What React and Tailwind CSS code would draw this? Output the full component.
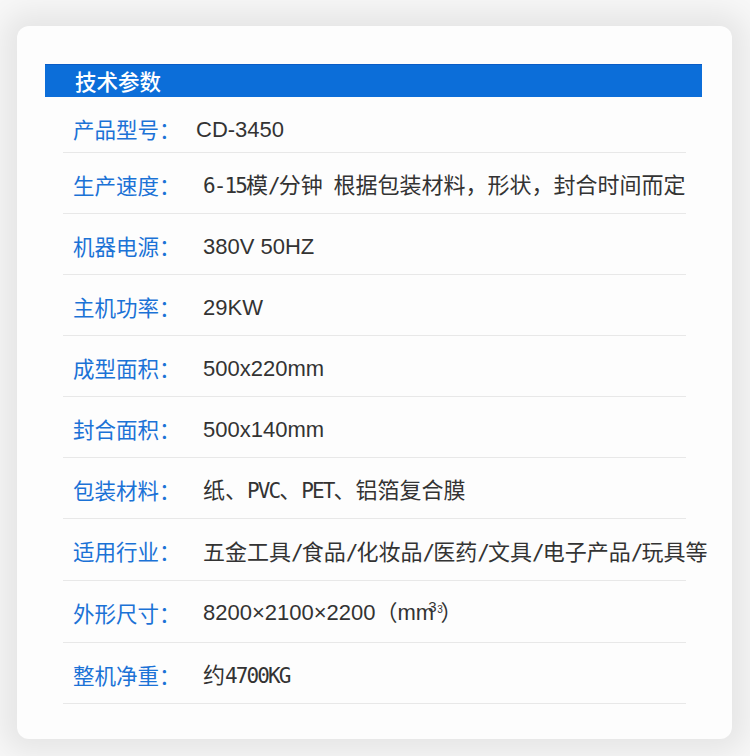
const cjk = "font-['Noto_Sans_CJK_SC',sans-serif]";
const arial = "font-['Liberation_Sans','Noto_Sans_CJK_SC',sans-serif]";

// half-width latin runs, like SimHei's narrow digits
function M({ children }) {
  return (
    <span className="font-['DejaVu_Sans_Mono',monospace] text-[21px] tracking-[-1.9px]">
      {children}
    </span>
  );
}

const rows = [
  { label: "产品型号", value: <span className={`${arial} -ml-[7px]`}>CD-3450</span> },
  {
    label: "生产速度",
    value: (
      <span className={cjk}>
        <M>6-15</M>模<M>/</M>分钟<M> </M>根据包装材料，形状，封合时间而定
      </span>
    ),
  },
  { label: "机器电源", value: <span className={arial}>380V 50HZ</span> },
  { label: "主机功率", value: <span className={arial}>29KW</span> },
  { label: "成型面积", value: <span className={arial}>500x220mm</span> },
  { label: "封合面积", value: <span className={arial}>500x140mm</span> },
  {
    label: "包装材料",
    value: (
      <span className={cjk}>
        纸、<M>PVC</M>、<M>PET</M>、铝箔复合膜
      </span>
    ),
  },
  {
    label: "适用行业",
    value: (
      <span className={cjk}>
        五金工具<M>/</M>食品<M>/</M>化妆品<M>/</M>医药<M>/</M>文具<M>/</M>电子产品<M>/</M>玩具等
      </span>
    ),
  },
  {
    label: "外形尺寸",
    value: (
      <span className={arial}>
        8200×2100×2200（mm
        <span className="relative -ml-[6px] inline-block -translate-y-[8px] text-[15px]">
          3
          <span className="absolute left-[9px] top-[3px] text-[10px]">3</span>
        </span>
        <span className="ml-[4px]">）</span>
      </span>
    ),
  },
  {
    label: "整机净重",
    value: (
      <span className={cjk}>
        约<M>4700KG</M>
      </span>
    ),
  },
];

function rowHeight(i) {
  if (i === 0) return "h-[56px] pt-[8px]";
  if (i === 7 || i === 8) return "h-[62px] pt-[3px]";
  return "h-[61px] pt-[3px]";
}

function App() {
  return (
    <div className="min-h-[756px] w-[750px] bg-[#f7f7f7] pl-[17px] pt-[26px]">
      <div className="h-[713px] w-[715px] rounded-[12px] bg-[#fdfdfd] pl-[28px] pr-[30px] pt-[38px] shadow-[0_0_28px_14px_rgba(0,0,0,0.07)]">
        {/* Header */}
        <div className="flex h-[33px] items-center border-t border-[#0a5cc6] bg-[#0c6ed9] pl-[30px]">
          <span className={`${cjk} text-[21.5px] font-medium leading-none text-white`}>
            技术参数
          </span>
        </div>

        {/* Spec rows */}
        <div className="ml-[18px] mr-[16px]">
          {rows.map((row, i) => (
            <div
              key={row.label}
              className={`flex items-center border-b border-[#e8e8e8] pl-[10px] ${rowHeight(i)}`}
            >
              <span className={`${cjk} w-[130px] shrink-0 text-[21.5px] leading-[24px] text-[#1b72d6]`}>
                {row.label}：
              </span>
              <span className="whitespace-nowrap text-[22px] leading-[24px] text-[#333333]">
                {row.value}
              </span>
            </div>
          ))}
        </div>
      </div>
    </div>
  );
}

export default App;
